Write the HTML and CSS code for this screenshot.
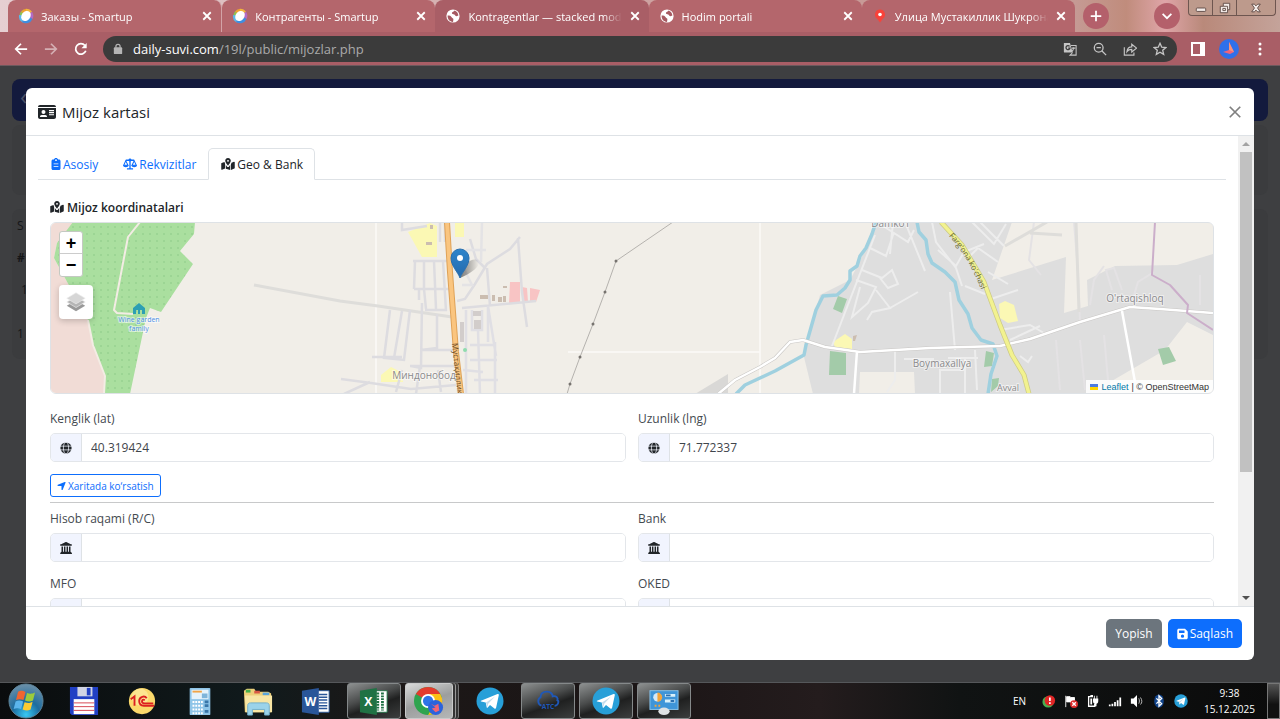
FILE: index.html
```html
<!DOCTYPE html>
<html lang="uz">
  <head>
    <meta charset="UTF-8" />
    <title>Mijoz kartasi</title>
    <meta name="viewport" content="width=device-width, initial-scale=1.0" />
    <link rel="stylesheet" href="styles.css">
  </head>
  <body>
    <!-- shared icons -->
    <svg class="sprite" aria-hidden="true">
      <symbol id="i-close" viewBox="0 0 16 16"><path d="M3 3l10 10M13 3L3 13" fill="none" stroke="currentColor" stroke-width="2.400" /></symbol>
      <symbol id="i-smartup" viewBox="0 0 16 16">
        <path d="M1.500 8A7 7 0 0 1 6 1.500L8 8z" fill="#8cc152" />
        <path d="M3 4a7 7 0 0 1 5-3.300l1 6z" fill="#f0a030" />
        <path d="M8 .700a7 7 0 0 1 6 3L8 8z" fill="#f2b63c" />
        <path d="M14 3.700a7 7 0 0 1 .500 7.300L8 8z" fill="#b36bc4" />
        <path d="M1 7a7 7 0 0 0 4 7.500L8 8z" fill="#5bb8ea" />
        <path d="M4 14a7 7 0 0 0 10.500-3L8 7z" fill="#3f8ee0" />
        <ellipse cx="8" cy="8" rx="4.300" ry="5.500" transform="rotate(38 8 8)" fill="#fff" />
      </symbol>
      <symbol id="i-earth" viewBox="0 0 16 16">
        <circle cx="8" cy="8" r="6.600" fill="#fff" />
        <path d="M2.600 7.500c2 0 3.500.3 4 1.800.4 1 1.800.6 1.800 2.200L8 14c-3.500-.3-5.600-3-5.400-6.500zM9.500 2.600c-.3 1.600-2.500 1-2.600 2.400 0 1.300 1.300 1 2.400 1.400 1 .4.800 1.800 2.200 1.800l1.900-.7C13.200 5 11.600 3.200 9.500 2.600z" fill="#a65a62" />
      </symbol>
      <symbol id="i-map" viewBox="0 0 576 512"><path d="M408 120c0 54.600-73.100 151.900-105.200 192-7.700 9.600-22 9.600-29.600 0C241.100 271.900 168 174.600 168 120 168 53.700 221.700 0 288 0s120 53.700 120 120zm-120 40a40 40 0 1 0 0-80 40 40 0 0 0 0 80zM138 175c4 22 14 46 26 70v208L34 505c-16 6-34-5-34-22V239c0-10 6-19 15-22zm274 89c11-21 21-43 26-63l104-42c16-6 34 5 34 22v244c0 10-6 19-15 22l-149 60zM196 296c16 25 33 47 47 65 25 30 67 30 90 0 14-18 31-40 47-65v214l-184-53z" fill="currentColor" fill-rule="evenodd" /></symbol>
      <symbol id="i-globe" viewBox="0 0 16 16">
        <circle cx="8" cy="8" r="7.500" fill="currentColor" />
        <g fill="none" stroke="#f1f4fe" stroke-width="1"><ellipse cx="8" cy="8" rx="3.500" ry="8" /><path d="M0 5.500h16M0 10.500h16" /></g>
      </symbol>
      <symbol id="i-bank" viewBox="0 0 512 512"><path d="M243 4c8-5 18-5 26 0l192 96h19c18 0 32 14 32 28s-14 32-32 32H32c-18 0-32-14-32-32s14-28 32-28h19zM64 192h64v224h40V192h64v224h48V192h64v224h40V192h64v226l34 20v4l32 48c10 12 3 22-10 22H24c-15 0-24-10-15-22l23-52 32-20z" fill="currentColor" /></symbol>
      <symbol id="i-telegram" viewBox="0 0 28 28">
        <circle cx="14" cy="14" r="13.500" fill="#279fd8" />
        <path d="M5 13.700L21.500 7c1-.3 1.500.3 1.300 1.300l-2.700 12.400c-.2 1-1 1.200-1.700.7L14 18l-2.300 2.600c-.6.500-.9.400-1-.3l-1-4.700-4.500-1.200c-.6-.2-.7-.5-.2-.7z" fill="#fff" />
        <path d="M10 15.500l9-6-6.800 7.300-.8 3.200z" fill="#c4ddec" />
      </symbol>
    </svg>

    <header class="tabstrip">
      <nav class="tabs" aria-label="Tabs">
        <div class="tab">
          <svg class="favicon"><use href="#i-smartup" /></svg>
          <span class="tab-title">Заказы - Smartup</span>
          <button class="tab-close" aria-label="Close"><svg><use href="#i-close" /></svg></button>
        </div>
        <div class="tab">
          <svg class="favicon"><use href="#i-smartup" /></svg>
          <span class="tab-title">Контрагенты - Smartup</span>
          <button class="tab-close" aria-label="Close"><svg><use href="#i-close" /></svg></button>
        </div>
        <div class="tab active">
          <svg class="favicon"><use href="#i-earth" /></svg>
          <span class="tab-title">Kontragentlar — stacked modal</span>
          <button class="tab-close" aria-label="Close"><svg><use href="#i-close" /></svg></button>
        </div>
        <div class="tab">
          <svg class="favicon"><use href="#i-earth" /></svg>
          <span class="tab-title">Hodim portali</span>
          <button class="tab-close" aria-label="Close"><svg><use href="#i-close" /></svg></button>
        </div>
        <div class="tab">
          <svg class="favicon" viewBox="0 0 16 16"><path d="M8 1.500a5 5 0 0 1 3 9L8 14.500l-3-4a5 5 0 0 1 3-9z" fill="#f8423a" /><circle cx="8" cy="6.500" r="1.800" fill="#fff" /></svg>
          <span class="tab-title">Улица Мустакиллик Шукрона</span>
          <button class="tab-close" aria-label="Close"><svg><use href="#i-close" /></svg></button>
        </div>
      </nav>
      <button class="round-btn" aria-label="New tab"><svg viewBox="0 0 16 16"><path d="M8 2v12M2 8h12" /></svg></button>
      <button class="round-btn tab-search" aria-label="Search tabs"><svg viewBox="0 0 16 16"><path d="M3 5.500l5 5 5-5" /></svg></button>
      <div class="window-btns">
        <button aria-label="Minimize"><svg viewBox="0 0 14 14"><rect x="1.500" y="7" width="11" height="4" rx="1" /></svg></button>
        <button aria-label="Restore"><svg viewBox="0 0 14 14"><path d="M5 1.500h7.500V9H10v3.500H1.500V5H5z" /><path d="M4.500 7.500h3v2.500h-3zM5 5h5v4" /></svg></button>
        <button class="wide" aria-label="Close window"><svg viewBox="0 0 14 14"><path d="M2 2.500h3l2 2 2-2h3L8.800 7l3.200 4.500H9l-2-2-2 2H2L5.200 7z" /></svg></button>
      </div>
    </header>

    <div class="toolbar">
      <button class="nav-btn" aria-label="Back"><svg viewBox="0 0 16 16"><path d="M15 8H2M8 2L2 8l6 6" /></svg></button>
      <button class="nav-btn off" aria-label="Forward"><svg viewBox="0 0 16 16"><path d="M1 8h13M8 2l6 6-6 6" /></svg></button>
      <button class="nav-btn" aria-label="Reload"><svg viewBox="0 0 16 16"><path d="M13.500 10A6 6 0 1 1 12.500 4" /><path d="M14.500 1v6h-6z" fill="#fff" stroke="none" /></svg></button>
      <div class="omnibox">
        <svg class="lock" viewBox="0 0 12 14"><rect x="1" y="5" width="10" height="8" rx="1" fill="#b5b5b5" /><path d="M3.500 5.500V4a2.500 2.500 0 0 1 5 0v1.500" fill="none" stroke="#b5b5b5" stroke-width="1.500" /></svg>
        <a class="url" href="#"><b>daily-suvi.com</b>/19l/public/mijozlar.php</a>
        <button class="box-btn" aria-label="Translate"><svg viewBox="0 0 16 16"><path d="M1 1h7l3 11H2a1 1 0 0 1-1-1z" fill="#c5c5c5" stroke="none" /><path d="M9 4h6v11H8l3-3M10 7h4M12 6v1c0 2-1 3-2 4" stroke-width="1.200" /><path d="M7.500 5A2.300 2.300 0 1 0 8 7H6" stroke="#3b3b3b" /></svg></button>
        <button class="box-btn" aria-label="Zoom"><svg viewBox="0 0 16 16"><circle cx="6.500" cy="6.500" r="5" /><path d="M10 10l5 5M4 6.500h5" /></svg></button>
        <button class="box-btn" aria-label="Share"><svg viewBox="0 0 16 16"><path d="M1.500 6v9h11v-3M4.500 11C5 7 7 5.500 10 5.500V2.500L15.500 7 10 11.500v-3c-2.500 0-4 .500-5.500 2.500z" stroke-width="1.300" /></svg></button>
        <button class="box-btn" aria-label="Bookmark"><svg viewBox="0 0 16 16"><path d="M8 1.500l2 4.500 4.700.4-3.600 3.100 1.100 4.700L8 11.700l-4.200 2.500 1.100-4.700L1.300 6.400 6 6z" /></svg></button>
      </div>
      <button class="tool-btn" aria-label="Side panel"><svg viewBox="0 0 14 14"><path d="M1 1h12v12H1z" fill="none" stroke="#fff" stroke-width="2" /><path d="M9 1h4v12H9z" fill="#fff" /></svg></button>
      <button class="tool-btn profile" aria-label="Profile"><svg viewBox="0 0 20 20"><circle cx="10" cy="10" r="10" fill="#2f70ea" /><path d="M10 3l5 10-4 2-7-2 6-2z" fill="#f0647c" /><path d="M10 3l5 10-5-2z" fill="#f7947c" /></svg></button>
      <button class="tool-btn" aria-label="Menu"><svg viewBox="0 0 14 14"><circle cx="7" cy="2" r="1.500" fill="#fff" /><circle cx="7" cy="7" r="1.500" fill="#fff" /><circle cx="7" cy="12" r="1.500" fill="#fff" /></svg></button>
    </div>

    <main class="viewport">
      <!-- page under the backdrop -->
      <div class="under" aria-hidden="true">
        <div class="under-nav">‹</div>
        <div class="under-card filter"></div>
        <div class="under-card list">
          <span>S</span>
          <b>#</b>
          <span class="in">1</span>
          <span>1</span>
        </div>
      </div>

      <section class="modal" role="dialog" aria-labelledby="modalTitle">
        <div class="modal-header">
          <svg class="title-icon" viewBox="0 0 576 512"><path d="M0 96h576c0-35.300-28.700-64-64-64H64C28.700 32 0 60.700 0 96zm0 32v288c0 35.300 28.700 64 64 64h448c35.300 0 64-28.700 64-64V128zm64 277c0-29 24-53 53-53h118c29 0 53 24 53 53 0 6-5 11-11 11H75c-6 0-11-5-11-11zm112-213a64 64 0 1 1 0 128 64 64 0 1 1 0-128zm176 0h160v36H352zm0 66h160v36H352zm0 66h160v36H352z" fill="currentColor" fill-rule="evenodd" /></svg>
          <h5 id="modalTitle">Mijoz kartasi</h5>
          <button class="btn-close" aria-label="Yopish"><svg viewBox="0 0 16 16"><path d="M2 2l12 12M14 2L2 14" /></svg></button>
        </div>

        <div class="modal-body">
          <div class="modal-content">
            <nav class="nav-tabs">
              <a href="#asosiy"><svg viewBox="0 0 384 512"><path d="M192 0c-42 0-77 27-91 64H64C29 64 0 93 0 128v320c0 35 29 64 64 64h256c35 0 64-29 64-64V128c0-35-29-64-64-64h-37c-14-37-49-64-91-64zm0 56a36 36 0 1 1 0 72 36 36 0 0 1 0-72zM90 230h204v34H90zm0 110h204v34H90z" fill="currentColor" fill-rule="evenodd" /></svg>Asosiy</a>
              <a href="#rekvizitlar"><svg class="wide" viewBox="0 0 640 512"><path d="M320 40v430M130 84h380M180 482h280" stroke="currentColor" stroke-width="60" fill="none" /><circle cx="320" cy="70" r="66" fill="currentColor" /><path d="M128 110L30 310h196zM512 110l-98 200h196z" stroke="currentColor" stroke-width="46" fill="none" /><path d="M0 310h256c0 120-256 120-256 0zM384 310h256c0 120-256 120-256 0z" fill="currentColor" /></svg>Rekvizitlar</a>
              <a href="#geo" class="active"><svg class="wide"><use href="#i-map" /></svg>Geo &amp; Bank</a>
            </nav>

            <form class="pane" id="geo">
              <h6><svg><use href="#i-map" /></svg>Mijoz koordinatalari</h6>

              <div class="map">
                <svg class="map-canvas" viewBox="51 222 1162 172" preserveAspectRatio="xMidYMid slice">
                  <defs>
                    <pattern id="orchard" width="7" height="7" patternUnits="userSpaceOnUse"><rect width="7" height="7" fill="#aadf9f" /><circle cx="3" cy="3" r="1" fill="#98d290" /></pattern>
                    <linearGradient id="pin" x1="0" y1="0" x2="0" y2="1"><stop offset="0" stop-color="#2e85cb" /><stop offset="1" stop-color="#2569ac" /></linearGradient>
                    <linearGradient id="pinShadow"><stop offset="0" stop-color="#000" stop-opacity="0.500" /><stop offset="1" stop-color="#000" stop-opacity="0" /></linearGradient>
                    <path id="p-yellow" d="M951 234C966 250 978 272 986 294" />
                    <path id="p-orange" d="M455 343L461 400" />
                  </defs>
                  <rect x="51" y="222" width="1162" height="172" fill="#f1eee8" />

                  <!-- landuse -->
                  <path d="M51 222h23L57 243l-3 15 34 62 5 25 12 31-1 18H51z" fill="#f1dcd6" />
                  <path d="M73 222h122l-1 12-14 17 13 13-32 48-11-4-4 10-16 76h-26l1-18-12-31-5-25-34-62 3-15z" fill="url(#orchard)" />
                  <path d="M876 222l-10 26-8 17-8 15-30 15-14 50-2 12 9 37h400V222z" fill="#dedede" />
                  <path d="M695 394l33-20v20z" fill="#d9d8d6" />
                  <path d="M1012 222l-20 58 74-23-2 56 24-7-1-26 28-14 62-1 36-11v-32zM1110 382l55-32 22-28 26 13v59h-103zM860 372h54l1 22h-56z" fill="#f1eee8" />
                  <path d="M408 232l22-9 7 3v31h-15zM455 222h9v15h-9zM381 375l10-8 10 5 2 10h-22zM833 342l12-8 7 5v10l-17-2zM999 304l6-3 9 4 4 16-10 2-8-5z" fill="#fbf8b4" />
                  <path d="M838 296l9 3-5 14-9-4zM830 351l16 2v22h-17zM986 351l8 2-2 13-8 1zM992 379l7-1-1 8-7 6zM1158 349l11-2 7 14-13 4z" fill="#a3cba9" />
                  <path d="M510 282h10v21h-11zM522 287l5 1 1 14h-6zM530 288l10 2-4 12-6-1z" fill="#f8c4c4" />
                  <g fill="#cbbdb0"><path d="M430 225h3v4h-3zM426 242h6v3h-6zM480 295h8v4h-8zM492 295h3v6h-3zM498 297h4v5h-4zM503 296h3v6h-3zM503 286h4v2h-4zM853 336l4-1-2 6h-2z" /></g>

                  <!-- tile seams -->
                  <path d="M376 222v172M760 222v172M568 352h192" stroke="#fbfaf7" stroke-width="1.500" />

                  <!-- residential streets -->
                  <g fill="none" stroke="#dddce0" stroke-width="2.500">
                    <path d="M254 285l86 16 38 5 74 11" stroke="#deddda" stroke-width="3" />
                    <path d="M413 261h36M414 289h36M415 261l-1 28M424 261v28l2 20M434 261l2 48M443 261l3 50M419 289v11M425 310h22" />
                    <path d="M390 310l-6 48 20 2 6-50M402 311l-8 47M422 303l-1 65-10-2M437 314v34l-16 2M410 366h50M372 357h30M421 350h36" />
                    <path d="M341 379l30 4 40 6 45-4M344 394l26-12M402 222v8l25-4M440 222v20M445 222v20M402 370l-6 22M420 366l-4 28M438 370l3 22" />
                    <path d="M520 237l-10 12-23 15-12 20-10 15-8 2M518 238l4 54 5 35M487 268l3 38M462 308l74-7M470 239l6 20 8 8" />
                    <path d="M482 222l-1 40M466 250h20M462 265l10 20h-10" stroke="#e4e3e5" />
                    <path d="M466 310v84M472 310v20h10v-20M478 330l2 64M488 306v36M495 342v52M470 345h24M470 360h27M474 380h24M488 306l8 50M463 370l20 2" stroke="#e0dfe4" />
                  </g>
                  <path d="M473 311h8v5h-8zM474 320h7v9h-7zM460 322h4v20h-4z" fill="#d2cdcb" />
                  <circle cx="465" cy="350" r="2" fill="#8fdcae" />

                  <g fill="none" stroke="#ededed" stroke-width="2">
                    <path d="M875 235l-43 111M870 248l16 8 8-24M880 224l28 18 6-12M862 270l20 8 10-8 6 14-10 4-8-10M856 280l20 7-8 16-16 14 8-30M876 290l14 18-18 4-5 8M890 308l28-16M905 222l20 49M893 222l-3 32" />
                    <path d="M950 292l5 58M938 250l18 16 8-14 20-8M932 222l4 20 20 26 6 18M972 222l22 22 12-20M980 222l24 24M966 260l12-12 20 14M988 272l20 12M988 300l30-10M965 286l20 8 M1000 330l30-5 14 8M1010 340l30-14" />
                    <path d="M895 350v30l-8 12M904 359h30M965 358v35M948 358h30M940 394v-24h25M975 350l2 40M1020 356l8 6 4-6" />
                    <path d="M1080 322l-2-50-4-50M1090 305l4-25 10-14M1112 290l-6-20 8-2 8 22M1132 302l6-20 16-10M1034 222l-5 38 12 15M1056 340l4 50M1080 340l5 50M1104 335l4 45M1200 275v30" stroke="#e4e2e4" />
                  </g>
                  <path d="M1005 246l42-24M1030 233l32 2M1076 222l3 90" fill="none" stroke="#deddda" stroke-width="3" />

                  <!-- water -->
                  <g fill="none" stroke="#9fd0df" stroke-width="3.500" stroke-linejoin="round">
                    <path d="M876 222l-4 12-6 14-6 8-3 10-7 5v9l-5 8-8 7-14 1-7 14-10 35-2 10-29 16-30 14-9 9" />
                    <path d="M917 222l2 10 7 8 2 14 4 9 13 9 10 10 4 18 9 14 4 14 9 12 12 4 4 12-6 18-3 20" />
                  </g>
                  <!-- roads -->
                  <g fill="none" stroke-linejoin="round">
                    <path d="M140 222l-12 15-14 73 3 3 16 1M88 320l5 25 12 31-1 18" stroke="#f3ece4" stroke-width="2" />
                    <path d="M718 394l17-14 25-13 15-9 15-16 13-2 22 7 35 5 70-4 70-2 30-7 50-17 50-15 30 2 53 4" stroke="#c9c7c5" stroke-width="3.500" />
                    <path d="M718 394l17-14 25-13 15-9 15-16 13-2 22 7 35 5 70-4 70-2 30-7 50-17 50-15 30 2 53 4M1122 311l13 71M857 351l-3 43" stroke="#fff" stroke-width="2.500" />
                    <path d="M941 222l21 23 22 37 16 43 12 30 12 20 5 19" stroke="#cdca85" stroke-width="5" />
                    <path d="M941 222l21 23 22 37 16 43 12 30 12 20 5 19" stroke="#f2f28f" stroke-width="3.500" />
                    <path d="M447 222l3 50 3 40 3 40 5 42" stroke="#dfa257" stroke-width="6" />
                    <path d="M447 222l3 50 3 40 3 40 5 42" stroke="#fac57f" stroke-width="4" />
                    <path d="M1155 222l-3 53 18 10 18 20-1 8 26 17" stroke="#cbaeca" stroke-width="2" />
                    <path d="M673 222l-57 39-11 31-12 32-13 33-10 27-3 10" stroke="#b5b2ae" stroke-width="1" />
                  </g>
                  <g fill="#77736f"><circle cx="616" cy="261" r="1.500" /><circle cx="605" cy="292" r="1.500" /><circle cx="593" cy="324" r="1.500" /><circle cx="580" cy="357" r="1.500" /><circle cx="570" cy="384" r="1.500" /></g>

                  <!-- places -->
                  <g class="map-text">
                    <text x="424" y="379" font-size="10">Миндонобод</text>
                    <text x="890" y="227" font-size="10">Damkoʻl</text>
                    <text x="942" y="367" font-size="10">Boymaxallya</text>
                    <text x="1135" y="302" font-size="10">O'rtaqishloq</text>
                    <text x="1008" y="391" font-size="9">Avval</text>
                    <text class="poi" x="139" y="322" font-size="7">Wine garden</text>
                    <text class="poi" x="139" y="331" font-size="7">family</text>
                  </g>
                  <text class="road-text" dy="3" font-size="8"><textPath href="#p-yellow">Farg'ona ko'chasi</textPath></text>
                  <text class="road-text orange" dy="3" font-size="8"><textPath href="#p-orange">Мустақиллик</textPath></text>
                  <path d="M133 308l6-5 6 5v6h-3v-4h-2v4h-2v-4h-2v4h-3z" fill="#2d9fb3" />

                  <!-- marker -->
                  <path d="M460 278l6-14c4-5 12-6 13-2s-7 11-19 16z" fill="url(#pinShadow)" />
                  <path d="M460 278c-2-6-9-12-9-20a9 9 0 0 1 18 0c0 8-7 14-9 20z" fill="url(#pin)" stroke="#2a6fae" />
                  <circle cx="460" cy="258" r="3" fill="#fff" />
                </svg>
                <div class="zoom-ctl">
                  <button type="button" aria-label="Zoom in">+</button>
                  <button type="button" aria-label="Zoom out">−</button>
                </div>
                <button type="button" class="layers" aria-label="Layers">
                  <svg viewBox="0 0 26 26"><path d="M3 17l10-6 10 6-10 6z" fill="#999" /><path d="M3 13l10-6 10 6-10 6z" fill="#b5b5b5" stroke="#eee" stroke-width="0.700" /><path d="M3 9l10-6 10 6-10 6z" fill="#d6d6d6" stroke="#eee" stroke-width="0.700" /></svg>
                </button>
                <div class="attribution"><i class="flag"></i><a href="#">Leaflet</a> | © OpenStreetMap</div>
              </div>

              <div class="grid">
                <div>
                  <label for="lat">Kenglik (lat)</label>
                  <div class="input-group"><span><svg><use href="#i-globe" /></svg></span><input id="lat" value="40.319424" /></div>
                </div>
                <div>
                  <label for="lng">Uzunlik (lng)</label>
                  <div class="input-group"><span><svg><use href="#i-globe" /></svg></span><input id="lng" value="71.772337" /></div>
                </div>
              </div>

              <button type="button" class="btn-outline"><svg viewBox="0 0 448 512"><path d="M429.600 92.100c4.900-11.900 2.100-25.600-7-34.700s-22.800-11.900-34.700-7l-352 144c-14.200 5.800-22.200 20.800-19.300 35.800s16.100 25.800 31.400 25.800h176v176c0 15.300 10.800 28.400 25.800 31.400s30-5.100 35.800-19.300z" fill="currentColor" /></svg>Xaritada ko‘rsatish</button>
              <hr />

              <div class="grid bank">
                <div>
                  <label for="account">Hisob raqami (R/C)</label>
                  <div class="input-group"><span><svg><use href="#i-bank" /></svg></span><input id="account" /></div>
                </div>
                <div>
                  <label for="bank">Bank</label>
                  <div class="input-group"><span><svg><use href="#i-bank" /></svg></span><input id="bank" /></div>
                </div>
                <div>
                  <label for="mfo">MFO</label>
                  <div class="input-group"><span></span><input id="mfo" /></div>
                </div>
                <div>
                  <label for="oked">OKED</label>
                  <div class="input-group"><span></span><input id="oked" /></div>
                </div>
              </div>
            </form>
          </div>

          <div class="scrollbar" aria-hidden="true">
            <i class="arrow up"></i>
            <div class="track"><div class="thumb"></div></div>
            <i class="arrow down"></i>
          </div>
        </div>

        <div class="modal-footer">
          <button class="btn gray">Yopish</button>
          <button class="btn blue"><svg viewBox="0 0 448 512"><path d="M64 32C29 32 0 61 0 96v320c0 35 29 64 64 64h320c35 0 64-29 64-64V173c0-17-7-33-19-45l-77-77c-12-12-28-19-45-19zm10 70h236v112H74zm150 176a70 70 0 1 1 0 140 70 70 0 0 1 0-140z" fill="currentColor" fill-rule="evenodd" /></svg>Saqlash</button>
        </div>
      </section>
    </main>

    <footer class="taskbar">
      <button class="start" aria-label="Start">
        <svg viewBox="0 0 36 36">
          <defs><radialGradient id="orb" cx="0.500" cy="0.900" r="0.900"><stop offset="0" stop-color="#38c8f4" /><stop offset="0.450" stop-color="#1c6c9f" /><stop offset="1" stop-color="#6d90a8" /></radialGradient></defs>
          <circle cx="18" cy="18" r="17" fill="url(#orb)" stroke="#5e8499" />
          <path d="M10 9c3-2 5-1 7.500 0l-2 8c-3-1-5-1-7.500 0z" fill="#f0652f" />
          <path d="M19 10c3 1 5 1 8-.500l-2 8c-3 1.500-5 1-8 0z" fill="#9ccb3b" />
          <path d="M7.600 18.500c3-1.500 5-1 7.500 0l-2 7.500c-3-1-5-1-7.500 0z" fill="#5bb5ec" />
          <path d="M16.600 19.300c3 1 5 1 8-.500l-2 7.700c-3 1.500-5 1-8 0z" fill="#fccb30" />
        </svg>
      </button>
      <div class="apps">
        <button aria-label="Total Commander"><svg viewBox="0 0 32 32"><path d="M1 1h30v30H3l-2-2z" fill="#2140c4" /><path d="M9 1h16v10H9z" fill="#d0d4e4" /><path d="M19 2h4v8h-4z" fill="#2140c4" /><path d="M5 14h22v16H5z" fill="#fff" /><path d="M5 18h22M5 22h22M5 26h22" stroke="#d4404c" /></svg></button>
        <button aria-label="1C"><svg viewBox="0 0 32 32"><circle cx="16" cy="16" r="14" fill="#fbd96b" /><circle cx="14" cy="12" r="9" fill="#fdeaa0" opacity="0.700" /><path d="M4 14l4-3v10M21 13c-2-3-8-2-8 3 0 4 3 5 5 5h11M19 15c-2-1-3 0-3 1.500s1 2 3 2h9" fill="none" stroke="#dc2020" stroke-width="2" /></svg></button>
        <button aria-label="Calculator"><svg viewBox="0 0 32 32"><rect x="5" y="2" width="22" height="29" rx="1" fill="#8fc5e8" /><rect x="7" y="4" width="18" height="10" fill="#e6f3fb" /><path d="M8 6h10" stroke="#f1a447" stroke-width="2" /><rect x="18" y="8" width="6" height="5" fill="#7fb5da" /><path d="M8 17h11M8 21h11M8 25h11M8 29h11" stroke="#fff" stroke-width="2" stroke-dasharray="2 1" /><path d="M21 17h4M21 21h4M21 27h4" stroke="#3976a8" stroke-width="3" /></svg></button>
        <button aria-label="Explorer"><svg viewBox="0 0 32 32"><path d="M1 5l3-2h8l2 3h13l3 2v20H2z" fill="#eed07a" /><path d="M3 4h5v3H3z" fill="#48b14a" /><path d="M12 5h6v3h-6z" fill="#d85a45" /><path d="M21 7h7v3h-7z" fill="#5aa5db" /><path d="M2 10h29v18H3z" fill="#f8e6a4" /><path d="M5 31V21c0-2 1-3 3-3h17c2 0 3 1 3 3v10h-5v-6H10v6z" fill="#9bd3ea" stroke="#70aecb" /></svg></button>
        <button aria-label="Word"><svg viewBox="0 0 32 32"><path d="M16 5h14v23H16z" fill="#fff" stroke="#2a5699" /><path d="M19 9h9M19 12h9M19 15h9M19 18h9M19 21h9M19 24h9" stroke="#2a5699" stroke-width="1.500" /><path d="M1 5l18-3v29L1 28z" fill="#2a5699" /><text x="10" y="21" class="app-letter">W</text></svg></button>
        <button class="open" aria-label="Excel"><svg viewBox="0 0 32 32"><path d="M16 5h14v23H16z" fill="#fff" stroke="#1f7244" /><path d="M20 7v19M25 7v19" stroke="#1f7244" stroke-width="3" stroke-dasharray="2 1" /><path d="M1 5l18-3v29L1 28z" fill="#1f7244" /><text x="10" y="21" class="app-letter">X</text></svg></button>
        <button class="open current" aria-label="Chrome"><svg viewBox="0 0 32 32"><circle cx="15" cy="16" r="15" fill="#2fa44f" /><path d="M15 16L2 8.500A15 15 0 0 1 28 8.500z" fill="#e33b2e" /><path d="M15 8.500h13A15 15 0 0 1 15 31l7-12z" fill="#fbc116" /><circle cx="15" cy="16" r="7.500" fill="#fff" /><circle cx="15" cy="16" r="5.500" fill="#2f74e8" /><circle cx="23" cy="23" r="8" fill="#2b63dc" /><path d="M18 19l4 2 4-2 1 7-4 2-4-4 4-1z" fill="#ef6575" /></svg></button>
        <button aria-label="Telegram"><svg><use href="#i-telegram" /></svg></button>
        <button class="open" aria-label="ATC"><svg viewBox="0 0 32 32"><path d="M9 21a5 5 0 0 1-1-9c0-4 3-6 7-6s6 3 6 5c4-1 6 2 5 4 2 1 1 6-3 6" fill="none" stroke="#1f58b8" stroke-width="2" /><text x="16" y="25" class="cloud-letter">ATC</text></svg></button>
        <button class="open" aria-label="Telegram"><svg><use href="#i-telegram" /></svg></button>
        <button class="open" aria-label="Control Panel"><svg viewBox="0 0 32 32"><rect x="1" y="5" width="30" height="20" fill="#3f95d8" stroke="#8ac4ea" /><circle cx="9" cy="12" r="4.500" fill="#d5e9f8" /><path d="M9 12V7a5 5 0 0 1 0 10z" fill="#f3a43a" /><path d="M17 10h11M17 16h11" stroke="#d9f1fb" stroke-width="3" /><path d="M18 10h5M23 16h4" stroke="#2a6fb0" stroke-width="2" /><path d="M6 21h2M10 21h2" stroke="#f3a43a" stroke-width="2" /><ellipse cx="16" cy="27" rx="6" ry="4" fill="#dfe2e4" /></svg></button>
      </div>

      <div class="tray">
        <span class="lang">EN</span>
        <svg viewBox="0 0 16 16"><circle cx="7" cy="9" r="6.500" fill="#4caf50" /><circle cx="9" cy="7.500" r="6" fill="#e02626" /><path d="M9 4v4M9 9.500v2" stroke="#fff" stroke-width="2" /></svg>
        <svg viewBox="0 0 16 16"><path d="M2 2v13M3 3h4l1 1h4v6H8L7 9H3z" fill="#fff" stroke="#fff" /><circle cx="11.500" cy="11.500" r="4.500" fill="#de2c2c" /><path d="M9.500 9.500l4 4M13.500 9.500l-4 4" stroke="#fff" stroke-width="1.500" /></svg>
        <svg viewBox="0 0 16 16"><path d="M8 3H3v11h7v-3M5 2h3" fill="none" stroke="#fff" stroke-width="1.500" /><path d="M5 5h2v7H5zM8 5h6v3c0 2-1 3-2 3v3h-2v-3c-1 0-2-1-2-3zM9 2h1v3H9zM12 2h1v3h-1z" fill="#fff" /></svg>
        <svg viewBox="0 0 16 16"><path d="M1 12h2v2H1zM4 11h2v3H4zM7 9h2v5H7zM10 7h2v7h-2zM13 4h2v10h-2z" fill="#fff" /></svg>
        <svg viewBox="0 0 16 16"><path d="M1 5h3l4-4v14l-4-4H1z" fill="#fff" /><path d="M10 5c1 2 1 4 0 6M12 4c2 3 2 6 0 8" fill="none" stroke="#ccc" /></svg>
        <svg viewBox="0 0 16 16"><ellipse cx="8" cy="8" rx="5.500" ry="7.500" fill="#12458c" /><path d="M5 5l6 6-3 3V2l3 3-6 6" fill="none" stroke="#fff" stroke-width="1.500" /></svg>
        <svg><use href="#i-telegram" /></svg>
        <time class="clock">9:38<br />15.12.2025</time>
        <button class="show-desktop" aria-label="Show desktop"></button>
      </div>
    </footer>
  </body>
</html>
```
FILE: styles.css
```css
* {
  box-sizing: border-box;
}

body {
  margin: 0;
  height: 100vh;
  display: flex;
  flex-direction: column;
  overflow: hidden;
  font-family: "Open Sans", "Noto Sans", sans-serif;
  font-size: 12px;
  color: #212529;
}

button {
  font-family: inherit;
  padding: 0;
  border: none;
  background: none;
  cursor: pointer;
}

svg {
  display: block;
  flex: none;
}

a {
  text-decoration: none;
}

.sprite {
  position: absolute;
  width: 0;
  height: 0;
}

/* browser tabs */
.tabstrip {
  display: flex;
  flex: none;
  height: 32px;
  padding: 0 4px 0 8px;
  background: linear-gradient(90deg, #e6cfd2 0, #c99a98 60%, #c59a94 84%, #c08c7c 88%, #dfa5a8 91%, #b9897a 94%, #c4a39a 100%);
}

.tabs {
  display: flex;
  flex: 0 1 1067px;
  min-width: 0;
}

.tab {
  display: flex;
  align-items: center;
  flex: 1;
  min-width: 0;
  gap: 7px;
  padding: 0 8px 0 10px;
  background-color: #b4666c;
  border-radius: 8px 8px 0 0;
}

.tab:first-child {
  border-right: 1px solid #d3a3a7;
}

.tab.active {
  background-color: #a95e66;
}

.favicon {
  width: 16px;
  height: 16px;
}

.tab-title {
  flex: 1;
  min-width: 0;
  overflow: hidden;
  white-space: nowrap;
  font-size: 11px;
  color: #fff;
  -webkit-mask-image: linear-gradient(90deg, #000 88%, transparent);
  mask-image: linear-gradient(90deg, #000 88%, transparent);
}

.tab-close svg {
  width: 12px;
  height: 12px;
  color: #fff;
}

.round-btn {
  flex: none;
  display: grid;
  place-items: center;
  width: 26px;
  height: 26px;
  margin: 3px 0 0 8px;
  border-radius: 50%;
  background-color: #b4606b;
}

.round-btn svg {
  width: 14px;
  height: 14px;
  fill: none;
  stroke: #fff;
  stroke-width: 2;
}

.tab-search {
  margin-left: auto;
}

.window-btns {
  display: flex;
  flex: none;
  height: 16px;
  margin-left: 8px;
  border: 1px solid #6e5650;
  border-top: none;
  border-radius: 0 0 4px 4px;
  background-color: #bd9a8c;
}

.window-btns button {
  display: grid;
  place-items: center;
  width: 24px;
  border-right: 1px solid #6e5650;
}

.window-btns .wide {
  width: 38px;
  border-right: none;
}

.window-btns svg {
  width: 12px;
  height: 12px;
  fill: #f3ebe8;
  stroke: #57433e;
}

/* address bar */
.toolbar {
  display: flex;
  flex: none;
  align-items: center;
  height: 34px;
  padding: 0 13px;
  background-color: #a95e66;
  border-bottom: 1px solid #6d5a5e;
}

.nav-btn {
  width: 18px;
  margin-right: 12px;
}

.nav-btn svg {
  width: 16px;
  height: 14px;
  fill: none;
  stroke: #fff;
  stroke-width: 2;
}

.nav-btn.off {
  opacity: 0.5;
}

.omnibox {
  display: flex;
  flex: 1;
  align-items: center;
  min-width: 0;
  height: 26px;
  padding: 0 10px 0 10px;
  border-radius: 13px;
  background-color: #3b3b3b;
}

.lock {
  width: 10px;
  height: 12px;
}

.url {
  flex: 1;
  margin-left: 10px;
  font-size: 13px;
  color: #aaa;
}

.url b {
  font-weight: 400;
  color: #fff;
}

.box-btn {
  width: 14px;
  margin-left: 16px;
}

.box-btn svg {
  width: 14px;
  height: 14px;
  fill: none;
  stroke: #c5c5c5;
  stroke-width: 1.5;
}

.tool-btn {
  width: 14px;
  margin-left: 14px;
}

.tool-btn svg {
  width: 14px;
  height: 14px;
}

.profile,
.profile svg {
  width: 20px;
  height: 20px;
}

/* page */
.viewport {
  position: relative;
  display: flex;
  flex: 1;
  min-height: 0;
  padding: 22px 26px;
  background-color: #3e3f41;
}

.under {
  position: absolute;
  inset: 13px 12px 0;
  color: #151618;
}

.under-nav {
  height: 42px;
  padding-left: 8px;
  border-radius: 8px;
  background-color: #131a3d;
  color: #4a4f66;
  font-size: 24px;
}

.under-card {
  border-radius: 8px;
  background-color: #3b3c3e;
}

.under-card.filter {
  height: 70px;
  margin-top: 4px;
}

.under-card.list {
  display: flex;
  flex-direction: column;
  gap: 15px;
  height: 150px;
  margin-top: 14px;
  padding: 8px 5px;
}

.under-card.list .in {
  padding-left: 4px;
}

.under-card.list span:last-child {
  margin-top: 12px;
}

/* modal */
.modal {
  position: relative;
  display: flex;
  flex: 1;
  flex-direction: column;
  min-width: 0;
  background-color: #fff;
  border-radius: 6px;
  overflow: hidden;
}

.modal-header {
  display: flex;
  flex: none;
  align-items: center;
  height: 48px;
  padding: 0 12px;
  border-bottom: 1px solid #dee2e6;
}

.title-icon {
  width: 18px;
  height: 16px;
  margin-right: 6px;
}

.modal-header h5 {
  flex: 1;
  margin: 0;
  font-size: 15px;
  font-weight: 400;
}

.btn-close svg {
  width: 14px;
  height: 14px;
  fill: none;
  stroke: #808080;
  stroke-width: 2;
}

.modal-body {
  display: flex;
  flex: 1;
  min-height: 0;
}

.modal-content {
  flex: 1;
  min-width: 0;
  padding: 12px;
  overflow: hidden;
}

.nav-tabs {
  display: flex;
  border-bottom: 1px solid #dee2e6;
}

.nav-tabs a {
  display: flex;
  align-items: center;
  height: 32px;
  margin-bottom: -1px;
  padding: 0 11px 0 12px;
  border: 1px solid transparent;
  border-radius: 5px 5px 0 0;
  color: #0d6efd;
}

.nav-tabs a.active {
  color: #212529;
  background-color: #fff;
  border-color: #dee2e6 #dee2e6 #fff;
}

.nav-tabs svg {
  width: 10px;
  height: 12px;
  margin-right: 2px;
}

.nav-tabs svg.wide {
  width: 14px;
}

.pane {
  padding: 17px 12px 12px;
}

.pane h6 {
  display: flex;
  align-items: center;
  height: 20px;
  margin: 0 0 5px;
  font-size: 12px;
  font-weight: 600;
}

.pane h6 svg {
  width: 14px;
  height: 12px;
  margin-right: 3px;
}

.map {
  position: relative;
  height: 172px;
  border: 1px solid #dee2e6;
  border-radius: 6px;
  overflow: hidden;
}

.map-canvas {
  width: 100%;
  height: 100%;
}

.map-text {
  fill: #8b8a8c;
  text-anchor: middle;
  stroke: #fff;
  stroke-opacity: 0.5;
  stroke-width: 2px;
  paint-order: stroke;
}

.poi {
  fill: #4f8fe6;
}

.road-text {
  fill: #6b6b34;
}

.road-text.orange {
  fill: #6b4a25;
}

.zoom-ctl {
  position: absolute;
  top: 8px;
  left: 8px;
  width: 24px;
  border: 1px solid #c4c9c2;
  border-radius: 3px;
  background-color: #fff;
  overflow: hidden;
}

.zoom-ctl button {
  display: block;
  width: 100%;
  height: 22px;
  font: bold 18px/20px "Liberation Sans", Arial, sans-serif;
}

.zoom-ctl button:first-child {
  border-bottom: 1px solid #ccc;
}

.layers {
  position: absolute;
  top: 62px;
  left: 8px;
  display: grid;
  place-items: center;
  width: 34px;
  height: 34px;
  border-radius: 4px;
  background-color: #fff;
  box-shadow: 0 2px 6px rgba(0, 0, 0, 0.2);
}

.layers svg {
  width: 24px;
  height: 24px;
}

.attribution {
  position: absolute;
  right: 0;
  bottom: 0;
  display: flex;
  align-items: center;
  gap: 3px;
  height: 13px;
  padding: 0 4px;
  background-color: rgba(255, 255, 255, 0.85);
  font: 9px "Liberation Sans", Arial, sans-serif;
  color: #333;
}

.attribution a {
  color: #0078a8;
}

.flag {
  width: 8px;
  height: 6px;
  background: linear-gradient(#4c7be1 50%, #ffd500 50%);
}

.grid {
  display: grid;
  grid-template-columns: 1fr 1fr;
  gap: 12px;
  margin-top: 15px;
}

.grid label {
  display: block;
  height: 20px;
  margin-bottom: 4px;
  line-height: 20px;
  color: #444a50;
}

.input-group {
  display: flex;
  height: 29px;
  border: 1px solid #e3e6ea;
  border-radius: 5px;
  overflow: hidden;
}

.input-group span {
  display: grid;
  place-items: center;
  width: 31px;
  border-right: 1px solid #dee2e6;
  background-color: #f1f4fe;
}

.input-group svg {
  width: 12px;
  height: 12px;
}

.input-group input {
  flex: 1;
  min-width: 0;
  padding: 0 9px;
  border: none;
  outline: none;
  font-family: inherit;
  font-size: 12px;
  color: #3f454b;
}

.btn-outline {
  display: flex;
  align-items: center;
  height: 23px;
  margin-top: 12px;
  padding: 0 6px;
  border: 1px solid #0d6efd;
  border-radius: 3px;
  font-size: 10px;
  color: #0d6efd;
}

.btn-outline svg {
  width: 9px;
  height: 10px;
  margin-right: 2px;
}

hr {
  margin: 5px 0 0;
  border: none;
  border-top: 1px solid #c8c9ca;
}

.bank {
  margin-top: 6px;
}

/* page scrollbar of the modal body */
.scrollbar {
  display: flex;
  flex: none;
  flex-direction: column;
  align-items: center;
  width: 16px;
  background-color: #f1f1f1;
}

.arrow {
  width: 8px;
  height: 4px;
  margin: 6px 0;
  background-color: #505050;
  clip-path: polygon(0 100%, 50% 0, 100% 100%);
}

.arrow.up {
  background-color: #a3a3a3;
}

.arrow.down {
  clip-path: polygon(0 0, 100% 0, 50% 100%);
}

.track {
  flex: 1;
  width: 12px;
}

.thumb {
  height: 73%;
  background-color: #c1c1c1;
}

.modal-footer {
  display: flex;
  flex: none;
  align-items: center;
  justify-content: flex-end;
  gap: 6px;
  height: 54px;
  padding: 0 12px;
  border-top: 1px solid #dee2e6;
}

.btn {
  display: flex;
  align-items: center;
  height: 29px;
  padding: 0 9px;
  border-radius: 5px;
  font-size: 12px;
  color: #fff;
}

.btn.gray {
  background-color: #6c757d;
}

.btn.blue {
  background-color: #0d6efd;
}

.btn svg {
  width: 11px;
  height: 12px;
  margin-right: 2px;
}

/* taskbar */
.taskbar {
  display: flex;
  flex: none;
  align-items: center;
  height: 37px;
  background: linear-gradient(90deg, #0a0c0d 0, #101a1c 20%, #1c1817 30%, #1b1516 50%, #241c1d 64%, #101313 75%, #0b0b0b 100%);
  border-top: 1px solid #55575a;
}

.start {
  width: 51px;
  margin-right: 6px;
}

.start svg {
  width: 36px;
  height: 36px;
  margin: 0 auto;
}

.apps {
  display: flex;
  gap: 4px;
}

.apps button {
  display: grid;
  place-items: center;
  width: 54px;
  height: 36px;
  border: 1px solid transparent;
  border-radius: 3px;
}

.apps .open {
  border-color: #85898a;
  background: linear-gradient(160deg, #8d9090 0, #4a4c4c 40%, #1f2020 60%, #3c3e3e 100%);
}

.apps .current {
  width: 48px;
  margin-right: 6px;
  border-color: #c9caca;
  background: linear-gradient(160deg, #d9dada 0, #9c9e9e 50%, #b5b7b7 100%);
  box-shadow: 2px 0 0 #333, 3px 0 0 #999, 5px 0 0 #333, 6px 0 0 #777;
}

.apps svg {
  width: 30px;
  height: 30px;
}

.apps svg:has(use) {
  width: 28px;
  height: 28px;
}

.app-letter {
  fill: #fff;
  font-size: 13px;
  font-weight: 700;
  text-anchor: middle;
}

.cloud-letter {
  fill: #1f58b8;
  font-size: 7px;
  font-weight: 700;
  text-anchor: middle;
}

.tray {
  display: flex;
  align-items: center;
  gap: 8px;
  height: 100%;
  margin-left: auto;
  color: #fff;
  font-size: 10px;
}

.tray svg {
  width: 14px;
  height: 14px;
}

.lang {
  margin-right: 8px;
}

.clock {
  margin: 0 4px 0 8px;
  text-align: center;
  line-height: 16px;
}

.show-desktop {
  width: 13px;
  height: 100%;
  border: 1px solid #777;
  background: linear-gradient(#555, #111 60%);
}
```
